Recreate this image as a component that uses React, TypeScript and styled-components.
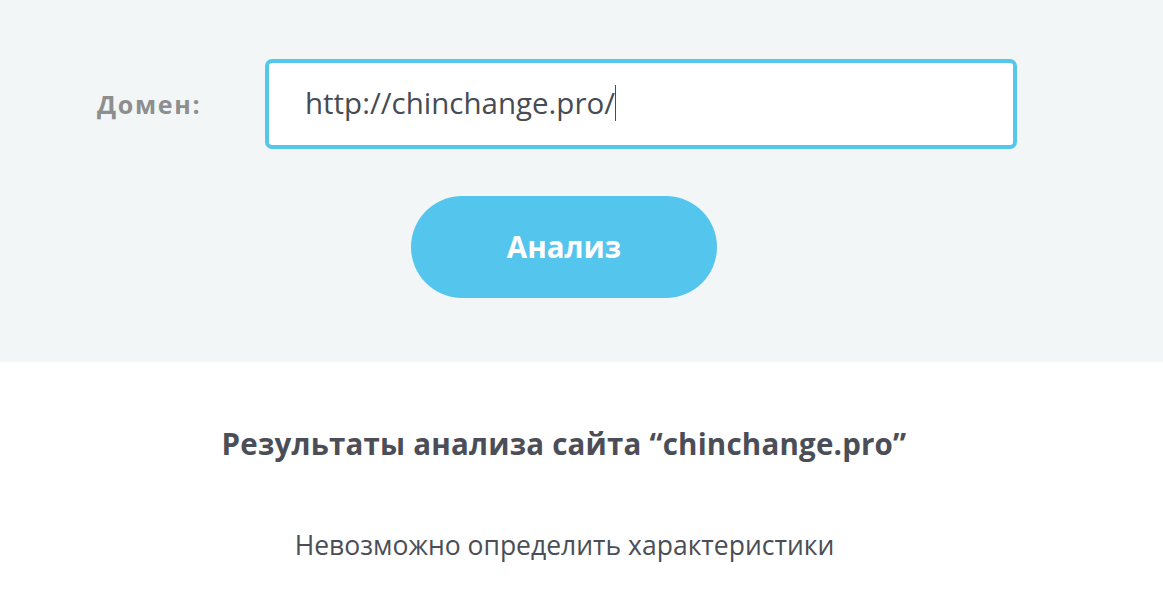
import React from "react";
import styled, { createGlobalStyle } from "styled-components";

const Global = createGlobalStyle`
  html, body { margin: 0; padding: 0; background: #ffffff; }
  body { font-family: "Open Sans", "Noto Sans", sans-serif; }
  * { box-sizing: border-box; }
`;

const Panel = styled.section`
  background: #f2f6f7;
  height: 362px;
  padding-top: 59px;
  display: flex;
  flex-direction: column;
`;

const Row = styled.div`
  display: flex;
  align-items: center;
  padding-left: 97px;
`;

const Label = styled.label`
  width: 168px;
  font-size: 25px;
  line-height: 34px;
  font-weight: 700;
  letter-spacing: 1.7px;
  color: #8e8e8e;
`;

const InputBox = styled.div`
  width: 752px;
  height: 90px;
  border: 4px solid #55c6ec;
  border-radius: 7px;
  background: #ffffff;
  display: flex;
  align-items: center;
  padding: 0 0 2px 36px;
  font-size: 29.5px;
  line-height: 40px;
  color: #474b54;
`;

const Caret = styled.span`
  display: inline-block;
  width: 1px;
  height: 36px;
  background: #474b54;
  margin-left: 0;
`;

const Button = styled.button`
  margin: 47px 0 0 411px;
  width: 306px;
  height: 102px;
  border: none;
  border-radius: 51px;
  background: #54c5ec;
  color: #ffffff;
  font-family: inherit;
  font-size: 29.5px;
  line-height: 40px;
  font-weight: 700;
  cursor: pointer;
`;

const Results = styled.section`
  display: flex;
  flex-direction: column;
  align-items: center;
  color: #4b4e57;
`;

const Heading = styled.h2`
  margin: 62px 0 0 -35px;
  font-size: 29.5px;
  line-height: 40px;
  letter-spacing: 0.2px;
  font-weight: 700;
`;

const Message = styled.p`
  margin: 63px 0 0 -34px;
  font-size: 26.5px;
  line-height: 36px;
  font-weight: 400;
`;

export default function App() {
  return (
    <>
      <Global />
      <Panel>
        <Row>
          <Label>Домен:</Label>
          <InputBox>
            http://chinchange.pro/
            <Caret />
          </InputBox>
        </Row>
        <Button>Анализ</Button>
      </Panel>
      <Results>
        <Heading>Результаты анализа сайта “chinchange.pro”</Heading>
        <Message>Невозможно определить характеристики</Message>
      </Results>
    </>
  );
}
